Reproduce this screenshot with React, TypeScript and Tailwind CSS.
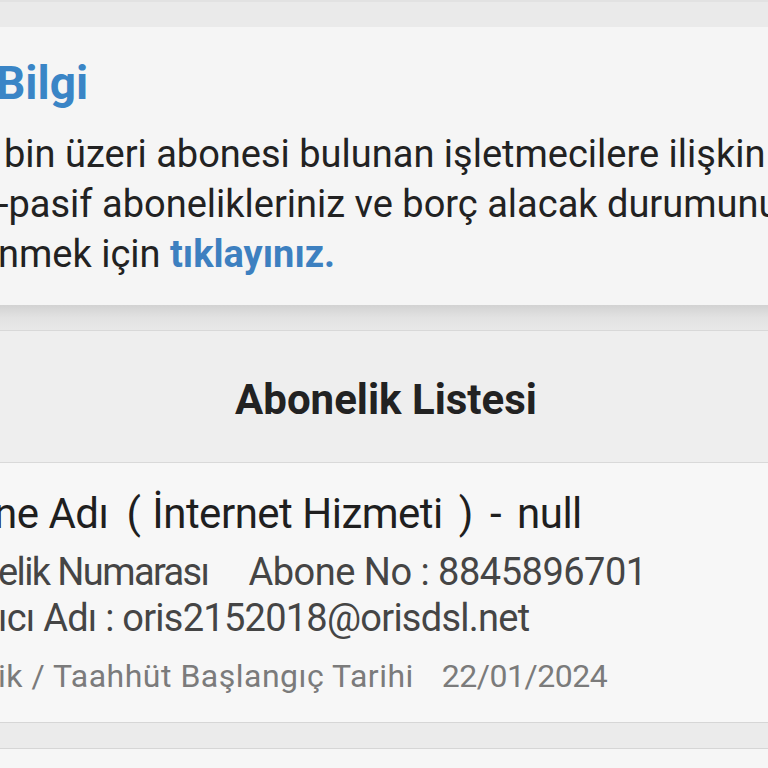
import React from "react";

export default function App() {
  return (
    <div
      className="w-[768px] h-[768px] overflow-hidden bg-[#eaeaea] flex flex-col"
      style={{ fontFamily: "Roboto, 'Noto Sans', sans-serif" }}
    >
      {/* top band */}
      <div className="h-[27px] shrink-0 bg-[#eaeaea] border-t-[2px] border-[#e2e2e2]" />

      {/* info card */}
      <div className="h-[278px] shrink-0 bg-[#f5f5f5] pt-[33px] overflow-hidden">
        <div className="text-[46px] leading-[46px] font-bold text-[#3a85c6] ml-[-4px] whitespace-nowrap">
          Bilgi
        </div>
        <div className="mt-[23px] text-[38px] leading-[50px] text-[#222222] whitespace-nowrap">
          <div className="ml-[4px]">bin üzeri abonesi bulunan işletmecilere ilişkin</div>
          <div className="ml-[-2px]">-pasif abonelikleriniz ve borç alacak durumunu</div>
          <div className="ml-[-2px]">
            nmek için <span className="font-bold text-[#3d80c0]">tıklayınız.</span>
          </div>
        </div>
      </div>

      {/* shadow under card */}
      <div className="h-[26px] shrink-0 bg-gradient-to-b from-[#d2d2d2] via-[#e2e2e2] to-[#e8e8e8] border-b border-[#d8d8d8]" />

      {/* header */}
      <div className="h-[132px] shrink-0 bg-[#eeeeee] flex items-center justify-center border-b border-[#d9d9d9]">
        <div className="text-[42px] leading-[42px] font-bold text-[#222222] pt-[6px] ml-[4px]">
          Abonelik Listesi
        </div>
      </div>

      {/* list item */}
      <div className="h-[259px] shrink-0 bg-[#f7f7f7] pt-[26px] whitespace-nowrap overflow-hidden">
        <div className="flex text-[42px] leading-[50px] tracking-[-0.5px] text-[#1f1f1f] ml-[-6px]">
          <span>ne Adı</span>
          <span className="ml-[18px]">(</span>
          <span className="ml-[12px]">İnternet Hizmeti</span>
          <span className="ml-[16px]">)</span>
          <span className="ml-[17px]">-</span>
          <span className="ml-[16px]">null</span>
        </div>
        <div className="mt-[10px] flex text-[38px] leading-[46px] tracking-[-0.5px] text-[#454545] ml-[-2px]">
          <span className="tracking-[-1.6px]">elik Numarası</span>
          <span className="ml-[40px]">Abone No : 8845896701</span>
        </div>
        <div className="text-[38px] leading-[46px] tracking-[-0.75px] text-[#454545] ml-[-2px]">
          ıcı Adı : oris2152018@orisdsl.net
        </div>
        <div className="mt-[15px] flex text-[32px] leading-[40px] text-[#7b7b7b] ml-[-2px]">
          <span className="tracking-[0.5px]">ik / Taahhüt Başlangıç Tarihi</span>
          <span className="ml-[28px] tracking-[-0.5px]">22/01/2024</span>
        </div>
      </div>

      {/* bottom band */}
      <div className="h-[27px] shrink-0 bg-[#ebebeb] border-t border-b border-[#d6d6d6]" />
      <div className="flex-1 bg-[#f6f6f6]" />
    </div>
  );
}
